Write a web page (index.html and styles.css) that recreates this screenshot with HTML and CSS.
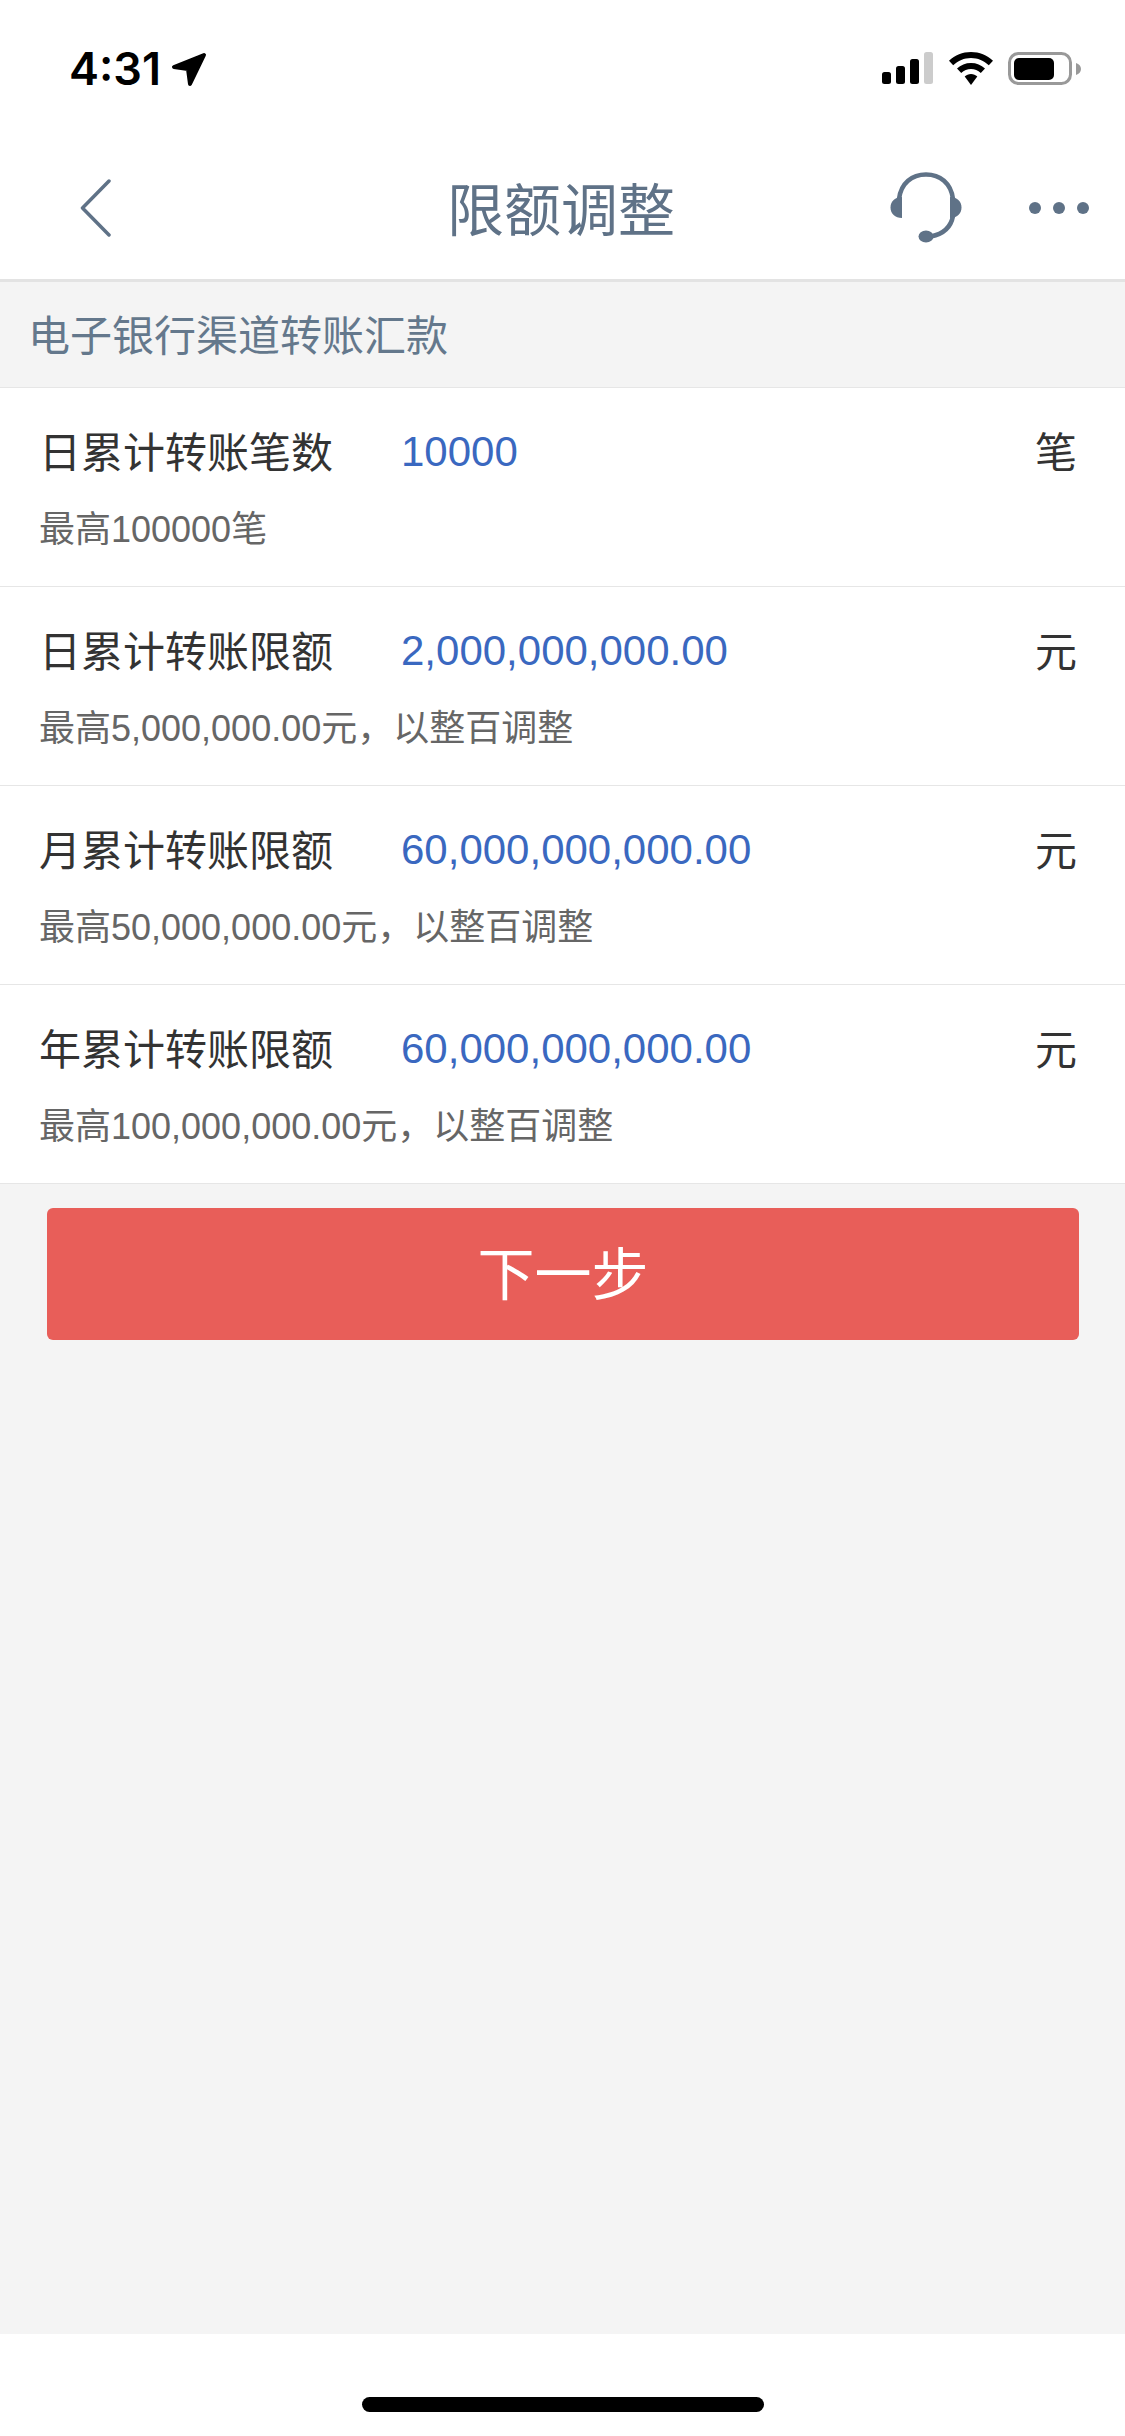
FILE: index.html
```html
<!DOCTYPE html>
<html lang="zh-CN">
<head>
<meta charset="utf-8">
<title>限额调整</title>
<link rel="stylesheet" href="styles.css">
</head>
<body>
<div class="page">
  <header class="header">
    <div class="status">
      <div class="status-left">
        <span class="time">4:31</span>
        <svg class="loc" width="38" height="36" viewBox="0 0 38 36"><path d="M34 4 L4 16 L18 18 L20 33 Z" fill="#000" stroke="#000" stroke-width="4" stroke-linejoin="round"/></svg>
      </div>
      <div class="status-right">
        <svg width="52" height="34" viewBox="0 0 52 34"><rect x="0" y="20" width="9" height="12" rx="2.5" fill="#000"/><rect x="14" y="14" width="9" height="18" rx="2.5" fill="#000"/><rect x="28" y="7" width="9" height="25" rx="2.5" fill="#000"/><rect x="42" y="0" width="9" height="32" rx="2.5" fill="#ccc"/></svg>
        <svg width="46" height="34" viewBox="0 0 46 34"><path d="M23 0 C14.500 0 7 3.300 1 8.800 L5.200 13.200 C10 8.800 16.200 6 23 6 C29.800 6 36 8.800 40.800 13.200 L45 8.800 C39 3.300 31.500 0 23 0 Z" fill="#000"/><path d="M23 11 C17.500 11 12.800 13 9 16.500 L13.200 21 C16 18.500 19.300 17 23 17 C26.700 17 30 18.500 32.800 21 L37 16.500 C33.200 13 28.500 11 23 11 Z" fill="#000"/><path d="M23 22 C20.500 22 18.500 23 16.700 24.500 L23 33 L29.300 24.500 C27.500 23 25.500 22 23 22 Z" fill="#000"/></svg>
        <svg width="74" height="34" viewBox="0 0 74 34"><rect x="1.500" y="1.500" width="61" height="30" rx="9" fill="none" stroke="#999" stroke-width="3"/><rect x="6" y="6" width="40" height="22" rx="5" fill="#000"/><path d="M68 11 C71 12 73 14 73 17 C73 20 71 22 68 23 Z" fill="#999"/></svg>
      </div>
    </div>
    <nav class="nav">
      <div class="nav-left">
        <svg width="34" height="58" viewBox="0 0 34 58"><path d="M30 2 L3.500 29 L30 56" fill="none" stroke="#5f7287" stroke-width="3.500" stroke-linecap="round" stroke-linejoin="round"/></svg>
      </div>
      <h1 class="title">限额调整</h1>
      <div class="nav-right">
        <svg class="headset" width="74" height="72" viewBox="0 0 74 72"><path d="M10 27 C12 11 23 2.500 37 2.500 C51 2.500 62 11 64 27" fill="none" stroke="#5f7287" stroke-width="4.500"/><path d="M13 25 L13 46 C6 46 1.500 41.500 1.500 35.500 C1.500 29.500 6 25 13 25 Z" fill="#5f7287"/><path d="M61 25 C68 25 72.500 29.500 72.500 35.500 C72.500 41.500 68 46 61 46 Z" fill="#5f7287"/><path d="M64 44 C62 55 54 62 42 64.500" fill="none" stroke="#5f7287" stroke-width="4.500"/><ellipse cx="37" cy="64.500" rx="7.500" ry="6" fill="#5f7287"/></svg>
        <div class="dots"><span class="dot"></span><span class="dot"></span><span class="dot"></span></div>
      </div>
    </nav>
  </header>
  <main class="main">
    <div class="section">电子银行渠道转账汇款</div>
    <div class="rows">
      <div class="row">
        <div class="row-top"><span class="label">日累计转账笔数</span><span class="value">10000</span><span class="unit">笔</span></div>
        <div class="hint">最高100000笔</div>
      </div>
      <div class="row">
        <div class="row-top"><span class="label">日累计转账限额</span><span class="value">2,000,000,000.00</span><span class="unit">元</span></div>
        <div class="hint">最高5,000,000.00元，以整百调整</div>
      </div>
      <div class="row">
        <div class="row-top"><span class="label">月累计转账限额</span><span class="value">60,000,000,000.00</span><span class="unit">元</span></div>
        <div class="hint">最高50,000,000.00元，以整百调整</div>
      </div>
      <div class="row">
        <div class="row-top"><span class="label">年累计转账限额</span><span class="value">60,000,000,000.00</span><span class="unit">元</span></div>
        <div class="hint">最高100,000,000.00元，以整百调整</div>
      </div>
    </div>
    <button class="next" type="button">下一步</button>
  </main>
  <footer class="footer"><div class="home"></div></footer>
</div>
</body>
</html>
```
FILE: styles.css
```css
* { box-sizing: border-box; }
html, body { margin: 0; padding: 0; }
body {
  background: #fff;
  font-family: "Liberation Sans", "Noto Sans CJK SC", sans-serif;
}
.page { width: 1125px; height: 2436px; display: flex; flex-direction: column; overflow: hidden; }
.header { background: #fff; border-bottom: 3px solid #e3e3e3; height: 282px; flex: none; }
.status {
  height: 142px;
  padding: 52px 42px 0 69px;
  display: flex;
  justify-content: space-between;
  align-items: flex-start;
}
.status-left { display: flex; align-items: center; gap: 9px; height: 34px; }
.time { font-family: Inter, "Liberation Sans", sans-serif; font-weight: 600; font-size: 45px; line-height: 34px; color: #000; }
.status-right { display: flex; align-items: flex-start; gap: 14px; margin-right: 1px; }
.nav {
  height: 137px;
  display: grid;
  grid-template-columns: 1fr auto 1fr;
  align-items: center;
  padding: 0 36px 6px 79px;
}
.nav-left { display: flex; align-items: center; }
.title {
  margin: 6px 0 0;
  font-size: 57px;
  line-height: 60px;
  font-weight: 400;
  color: #5f7287;
  position: relative;
  left: -23px;
}
.nav-right { display: flex; align-items: center; justify-content: flex-end; gap: 66px; }
.dots { display: flex; gap: 12px; }
.dot { width: 12px; height: 12px; border-radius: 50%; background: #5f7287; }
.main { flex: 1; background: #f4f4f4; display: flex; flex-direction: column; }
.section {
  height: 106px;
  padding: 0 28px 5px;
  display: flex;
  align-items: center;
  font-size: 42px;
  color: #64788c;
  border-bottom: 1px solid #e6e6e6;
}
.rows { background: #fff; }
.row {
  height: 199px;
  padding: 40px 48px 0 39px;
  border-bottom: 1px solid #e6e6e6;
}
.row-top { display: flex; align-items: center; height: 48px; }
.label { width: 362px; font-size: 42px; color: #333; flex: none; margin-bottom: 6px; }
.value { flex: 1; font-size: 42px; color: #3a68c0; }
.unit { font-size: 42px; color: #333; margin-bottom: 6px; }
.hint { margin-top: 34px; font-size: 36px; line-height: 40px; color: #666; }
.next {
  margin: 24px 46px 0 47px;
  height: 132px;
  border: 0;
  border-radius: 6px;
  background: #e85e59;
  color: #fff;
  font-family: inherit;
  font-size: 57px;
  padding: 0 0 8px;
}
.footer { height: 102px; background: #fff; flex: none; display: flex; justify-content: center; padding-top: 63px; }
.home { width: 402px; height: 15px; border-radius: 8px; background: #000; }
```
